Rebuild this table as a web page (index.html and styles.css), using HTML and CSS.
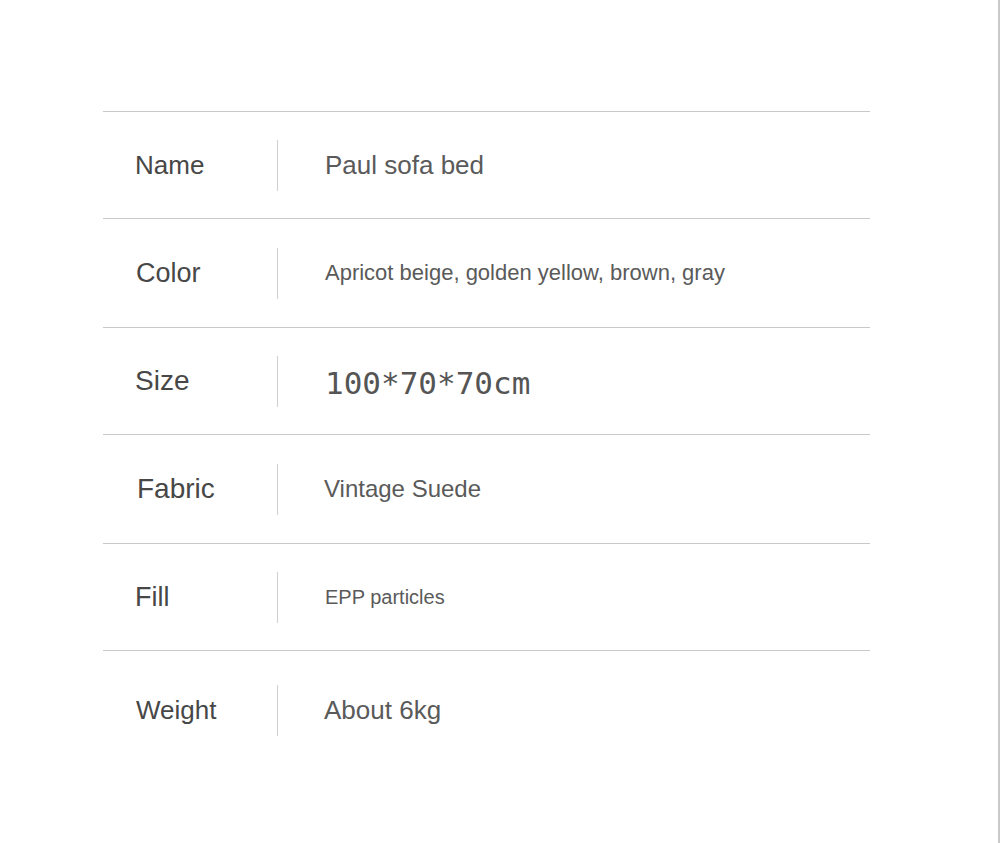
FILE: index.html
```html
<!DOCTYPE html>
<html lang="en">
<head>
<meta charset="utf-8">
<title>Product details</title>
<link rel="stylesheet" href="styles.css">
</head>
<body>
<div class="page">
  <div class="specs">
    <div class="row">
      <div class="label">Name</div>
      <div class="divider"></div>
      <div class="value v26">Paul sofa bed</div>
    </div>
    <div class="row">
      <div class="label l27 nudge">Color</div>
      <div class="divider"></div>
      <div class="value v22">Apricot beige, golden yellow, brown, gray</div>
    </div>
    <div class="row">
      <div class="label l28">Size</div>
      <div class="divider"></div>
      <div class="value mono">100*70*70cm</div>
    </div>
    <div class="row">
      <div class="label l28 shift">Fabric</div>
      <div class="divider"></div>
      <div class="value v24 back">Vintage Suede</div>
    </div>
    <div class="row">
      <div class="label l27">Fill</div>
      <div class="divider"></div>
      <div class="value v20">EPP particles</div>
    </div>
    <div class="row last">
      <div class="label nudge">Weight</div>
      <div class="divider"></div>
      <div class="value v26 back">About 6kg</div>
    </div>
  </div>
</div>
</body>
</html>
```
FILE: styles.css
```css
html, body {
  margin: 0;
  padding: 0;
  background: #ffffff;
}
.page {
  box-sizing: border-box;
  width: 1000px;
  height: 843px;
  border-right: 2px solid #c9c9c9;
  padding: 111px 0 0 103px;
  font-family: "Liberation Sans", Arial, sans-serif;
}
.specs {
  width: 767px;
}
.row {
  box-sizing: border-box;
  height: 107px;
  border-top: 1px solid #c8c8c8;
  display: flex;
  align-items: center;
}
.row:nth-child(even) {
  height: 109px;
}
.row.last {
  height: 120px;
}
.label {
  box-sizing: border-box;
  width: 174px;
  padding-left: 32px;
  font-size: 26px;
  color: #474747;
}
.label.l27 {
  font-size: 27px;
}
.label.l28 {
  font-size: 28px;
}
.label.nudge {
  padding-left: 33px;
}
.label.shift {
  padding-left: 34px;
}
.divider {
  width: 1px;
  height: 51px;
  background: #cfcfcf;
}
.value {
  padding-left: 47px;
  color: #5a5a5a;
}
.value.back {
  padding-left: 46px;
}
.v26 { font-size: 26px; }
.v24 { font-size: 24px; }
.v22 { font-size: 22px; }
.v20 { font-size: 20px; }
.mono {
  font-family: "DejaVu Sans Mono", monospace;
  font-size: 31px;
  color: #555555;
  padding-top: 3px;
}
```
